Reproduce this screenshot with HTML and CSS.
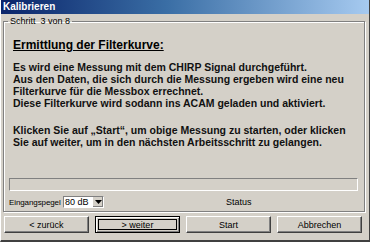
FILE: index.html
```html
<!DOCTYPE html>
<html lang="de">
<head>
    <meta charset="UTF-8">
    <title>Kalibrieren</title>
    <link rel="stylesheet" href="styles.css">
</head>
<body>
    <div class="window">
        <div class="titlebar">Kalibrieren</div>

        <fieldset class="step">
            <legend>Schritt&nbsp; 3 von 8</legend>

            <div class="info">
                <h3>Ermittlung der Filterkurve:</h3>
                <p>
                    Es wird eine Messung mit dem CHIRP Signal durchgeführt.<br>
                    Aus den Daten, die sich durch die Messung ergeben wird eine neu<br>
                    Filterkurve für die Messbox errechnet.<br>
                    Diese Filterkurve wird sodann ins ACAM geladen und aktiviert.
                </p>
                <p>
                    Klicken Sie auf „Start“, um obige Messung zu starten, oder klicken<br>
                    Sie auf weiter, um in den nächsten Arbeitsschritt zu gelangen.
                </p>
            </div>

            <div class="progress"></div>

            <div class="level-row">
                <label for="level">Eingangspegel</label>
                <div class="combo">
                    <span class="combo-value">80 dB</span>
                    <span class="combo-arrow">
                        <svg width="7" height="4" viewBox="0 0 7 4"><path d="M0 0h7L3.5 4z" fill="#000"/></svg>
                    </span>
                </div>
                <span class="status">Status</span>
            </div>
        </fieldset>

        <div class="buttons">
            <button>&lt; zurück</button>
            <button class="focused">&gt; weiter</button>
            <button>Start</button>
            <button>Abbrechen</button>
        </div>
    </div>
</body>
</html>
```

FILE: styles.css
```css
body {
    margin: 0;
    background-color: #d4d0c8;
    font-family: "Liberation Sans", Arial, sans-serif;
}
.window {
    width: 370px;
    height: 242px;
    box-sizing: border-box;
    border-left: 1px solid #fff;
    border-bottom: 2px solid #404040;
    border-right: 1px solid #404040;
    background-color: #d4d0c8;
}
.titlebar {
    height: 14px;
    line-height: 13px;
    padding-left: 2px;
    background: linear-gradient(to right, #0a246a 0%, #3a6ea5 45%, #a6caf0 100%);
    color: #fff;
    font-weight: bold;
    font-size: 10px;
}
.step {
    margin: 2px 4px 0 2px;
    padding: 0 6px 3px 5px;
    border: 1px solid #808080;
    box-shadow: inset 1px 1px 0 #fff, 1px 1px 0 #fff;
    height: 196px;
    box-sizing: border-box;
    display: flex;
    flex-direction: column;
}
.step legend {
    font-size: 9px;
    color: #000;
    padding: 0 2px;
    margin-left: -1px;
}
.info {
    flex: 1;
    padding-left: 4px;
    white-space: nowrap;
}
.info h3 {
    margin: 12px 0 9px;
    font-size: 12px;
    font-weight: bold;
    text-decoration: underline;
}
.info p {
    margin: 0 0 15px;
    font-size: 10.5px;
    line-height: 12px;
    font-weight: bold;
    color: #111;
}
.progress {
    height: 11px;
    border: 1px solid #808080;
    border-right-color: #fff;
    border-bottom-color: #fff;
    margin-bottom: 5px;
}
.level-row {
    display: flex;
    align-items: center;
    font-size: 9px;
    height: 12px;
}
.level-row label {
    width: 54px;
    font-size: 8px;
    letter-spacing: -0.1px;
}
.combo {
    display: flex;
    width: 41px;
    height: 12px;
    box-sizing: border-box;
    border: 1px solid #808080;
    border-right-color: #fff;
    border-bottom-color: #fff;
    background-color: #fff;
}
.combo-value {
    flex: 1;
    font-size: 9px;
    line-height: 10px;
    padding-left: 1px;
}
.combo-arrow {
    width: 10px;
    background-color: #d4d0c8;
    display: flex;
    align-items: center;
    justify-content: center;
    border-left: 1px solid #fff;
    box-shadow: inset -1px -1px 0 #808080;
}
.status {
    margin-left: 122px;
}
.buttons {
    display: flex;
    gap: 6px;
    padding: 4px 4px 0 3px;
}
.buttons button {
    width: 85px;
    height: 17px;
    padding: 0;
    font-family: "Liberation Sans", Arial, sans-serif;
    font-size: 9px;
    background-color: #d4d0c8;
    border: 1px solid;
    border-color: #fff #404040 #404040 #fff;
    box-shadow: inset -1px -1px 0 #808080;
    color: #000;
}
.buttons button.focused {
    outline: 1px solid #000;
    outline-offset: -4px;
    border-color: #000;
    box-shadow: inset 1px 1px 0 #fff, inset -1px -1px 0 #808080;
}
```
